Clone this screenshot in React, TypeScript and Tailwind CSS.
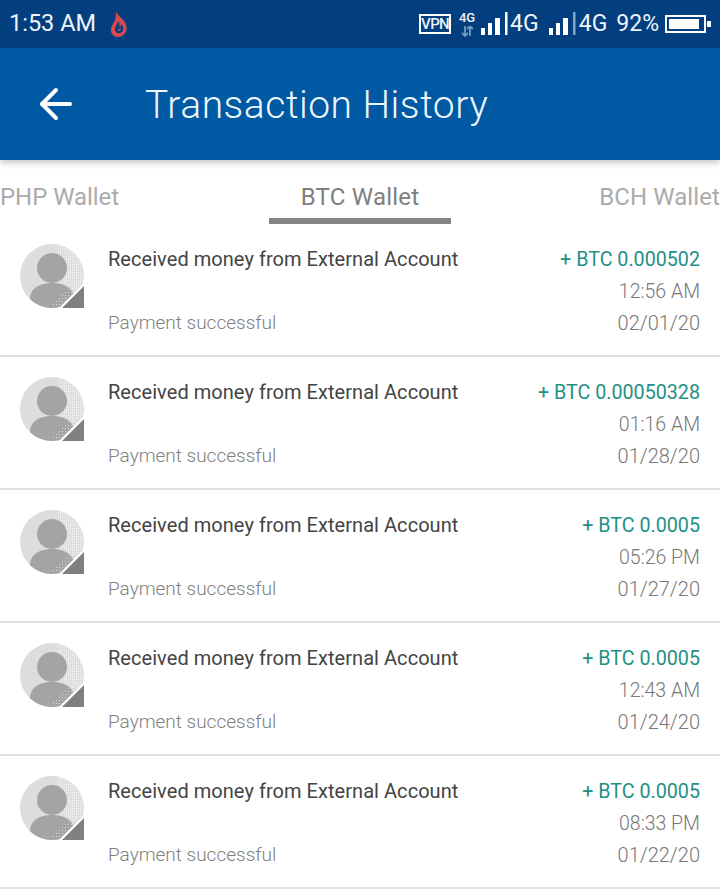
import { ArrowLeft } from 'lucide-react';

const rows = [
  { amount: '+ BTC 0.000502', time: '12:56 AM', date: '02/01/20' },
  { amount: '+ BTC 0.00050328', time: '01:16 AM', date: '01/28/20' },
  { amount: '+ BTC 0.0005', time: '05:26 PM', date: '01/27/20' },
  { amount: '+ BTC 0.0005', time: '12:43 AM', date: '01/24/20' },
  { amount: '+ BTC 0.0005', time: '08:33 PM', date: '01/22/20' },
];

function Flame() {
  return (
    <svg width="18" height="26" viewBox="0 0 18 26" className="ml-[14px]">
      <path
        d="M6 0C7 4 11 6 14 10C16 13 17 16 16.500 19C15.500 23 12 26 8 26C3 26 .5 22 1 18C1.500 14 4 12 5 9C6 6 6 3 6 0z"
        fill="#d9484f"
      />
      <path d="M9 10C7 13 4.500 16 5 19C5.500 22.500 10 23.500 12.500 20.500C14 18 13 15 11.500 13C11.500 15 10 16 9.500 15C9 14 9.500 12 9 10z" fill="#033f7f" />
      <path d="M10.500 16.500C11 18 10.500 19.500 9 20C8 20 7.500 19.500 7.500 19C8.500 19 9.800 18 10.500 16.500z" fill="#d9484f" />
    </svg>
  );
}

function Signal({ dotted }: { dotted?: boolean }) {
  return (
    <svg width="27" height="24" viewBox="0 0 27 24" className="shrink-0">
      <rect x="0" y="16" width="4" height="7" fill="#fff" />
      <rect x="7" y="11" width="4" height="12" fill="#fff" />
      <rect x="14" y="6" width="5" height="17" fill="#fff" />
      <rect x="24" y="0" width="2.500" height="23" fill={dotted ? '#7fa6c8' : '#fff'} />
    </svg>
  );
}

function StatusBar() {
  return (
    <div className="h-12 bg-[#033f7f] flex items-center justify-between pl-[9px] pr-[9px] text-[#eef4fa] font-[Roboto,sans-serif]">
      <div className="flex items-center text-[23.500px]">
        <span>1:53 AM</span>
        <Flame />
      </div>
      <div className="flex items-center text-[23px]">
        <span className="border-[2px] border-white text-[15px] leading-[16px] font-medium tracking-[-0.6px] h-5 w-[32px] flex items-center justify-center">
          VPN
        </span>
        <div className="ml-2 mr-[6px] flex flex-col items-center w-4">
          <span className="text-[13px] leading-[13px] font-medium">4G</span>
          <svg width="12" height="11" viewBox="0 0 12 11" className="mt-[2px]">
            <path d="M4 0v10M1 7l3 3 3-3" stroke="#6f9cc0" strokeWidth="1.800" fill="none" />
            <path d="M9 10V0M6 3l3-3 3 3" stroke="#6f9cc0" strokeWidth="1.800" fill="none" />
          </svg>
        </div>
        <Signal />
        <span className="ml-[2px] mr-[10px]">4G</span>
        <Signal dotted />
        <span className="ml-[3px] mr-[9px]">4G</span>
        <span className="mr-[6px]">92%</span>
        <div className="w-[41px] h-[18px] border-[2px] border-white p-[2px]">
          <div className="h-full w-[92%] bg-white" />
        </div>
        <div className="w-1 h-[6px] bg-white ml-[1px]" />
      </div>
    </div>
  );
}

function Avatar({ index }: { index: number }) {
  const light = `light-${index}`;
  const dark = `dark-${index}`;
  return (
    <div className="w-16 h-16 shrink-0">
      <svg width="64" height="64" viewBox="0 0 64 64">
        <defs>
          <pattern id={light} width="2" height="2" patternUnits="userSpaceOnUse">
            <rect width="1" height="1" fill="#f4f4f4" />
          </pattern>
          <pattern id={dark} width="3" height="3" patternUnits="userSpaceOnUse">
            <rect width="1" height="1" fill="#dddddd" />
          </pattern>
        </defs>
        <circle cx="32" cy="32" r="32" fill="#dcdddd" />
        <path d="M38 .6A32 32 0 0 1 64 32V41L52 46C50 40 42 39 38 38Z" fill={`url(#${light})`} />
        <circle cx="32" cy="24" r="15" fill="#a3a5a5" />
        <path d="M10 55.200C10 44 20 39 32 39S54 44 54 55.200A32 32 0 0 1 10 55.200z" fill="#a3a5a5" />
        <path d="M30 62 50 44 54 55 42 62z" fill={`url(#${dark})`} />
        <path d="M39 64 64 39v25z" fill="#fff" />
        <path d="M42 64 64 42v22z" fill="#808080" />
      </svg>
    </div>
  );
}

function Row({ amount, time, date, index }: { amount: string; time: string; date: string; index: number }) {
  return (
    <div className="h-[133px] border-b-2 border-[#e0e0e0] flex pl-5 pr-5 pt-5">
      <Avatar index={index} />
      <div className="ml-6 flex-1 flex flex-col text-[20px] leading-[32px]">
        <div className="-mt-[1px] text-[#444444] h-8 tracking-[0.05px]">Received money from External Account</div>
        <div className="mt-8 text-[#808080] font-light text-[19px]">Payment successful</div>
      </div>
      <div className="flex flex-col items-end text-[20px] leading-[32px]">
        <div className="text-[#1f8f85] text-[19.700px]">{amount}</div>
        <div className="text-[#777777] font-light text-[19.500px]">{time}</div>
        <div className="text-[#777777] font-light -mt-[1px]">{date}</div>
      </div>
    </div>
  );
}

export default function App() {
  return (
    <div className="w-[720px] h-[894px] overflow-hidden bg-white font-[Roboto,sans-serif]">
      <StatusBar />
      <div className="relative h-[112px] bg-[#0059a3] flex items-center shadow-[0_3px_6px_rgba(0,0,0,0.22)]">
        <ArrowLeft className="ml-8 text-white" size={48} strokeWidth={2} />
        <h1 className="ml-[65px] mt-[2px] text-[39px] font-light text-[#eef6fb] tracking-[0.5px]">Transaction History</h1>
      </div>
      <div className="h-16 grid grid-cols-[269px_182px_269px] items-start text-[24px] text-[#ababab] pt-[19px]">
        <span className="tracking-[-0.05px]">PHP Wallet</span>
        <div className="flex flex-col items-center">
          <span className="text-[#808080] tracking-[0.2px]">BTC Wallet</span>
          <div className="w-full h-[6px] bg-[#858585] mt-[3px]" />
        </div>
        <span className="tracking-[0.1px] text-right">BCH Wallet</span>
      </div>
      {rows.map((row, i) => (
        <Row key={row.time} index={i} {...row} />
      ))}
    </div>
  );
}
